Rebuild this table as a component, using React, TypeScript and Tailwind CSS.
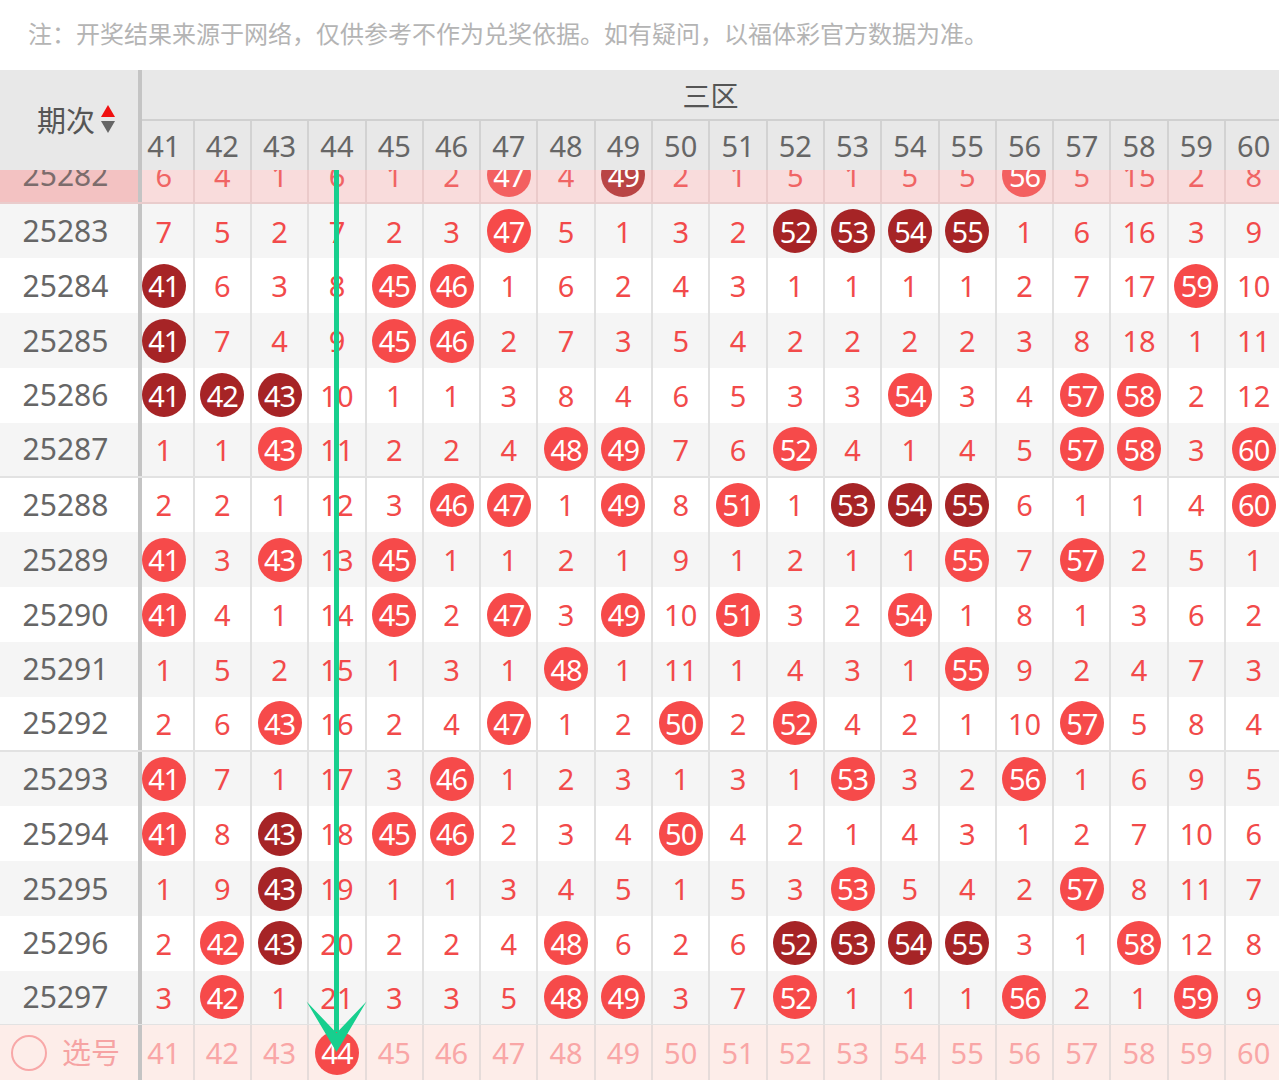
import React from "react";

const FONT = { fontFamily: '"Noto Sans", "Noto Sans CJK SC", sans-serif' };

const COLS = Array.from({ length: 20 }, (_, i) => 41 + i);

const ROWS: [string, string][] = [
  ["25282", "6 4 1 6 1 2 b47 4 d49 2 1 5 1 5 5 b56 5 15 2 8"],
  ["25283", "7 5 2 7 2 3 b47 5 1 3 2 d52 d53 d54 d55 1 6 16 3 9"],
  ["25284", "d41 6 3 8 b45 b46 1 6 2 4 3 1 1 1 1 2 7 17 b59 10"],
  ["25285", "d41 7 4 9 b45 b46 2 7 3 5 4 2 2 2 2 3 8 18 1 11"],
  ["25286", "d41 d42 d43 10 1 1 3 8 4 6 5 3 3 b54 3 4 b57 b58 2 12"],
  ["25287", "1 1 b43 11 2 2 4 b48 b49 7 6 b52 4 1 4 5 b57 b58 3 b60"],
  ["25288", "2 2 1 12 3 b46 b47 1 b49 8 b51 1 d53 d54 d55 6 1 1 4 b60"],
  ["25289", "b41 3 b43 13 b45 1 1 2 1 9 1 2 1 1 b55 7 b57 2 5 1"],
  ["25290", "b41 4 1 14 b45 2 b47 3 b49 10 b51 3 2 b54 1 8 1 3 6 2"],
  ["25291", "1 5 2 15 1 3 1 b48 1 11 1 4 3 1 b55 9 2 4 7 3"],
  ["25292", "2 6 b43 16 2 4 b47 1 2 b50 2 b52 4 2 1 10 b57 5 8 4"],
  ["25293", "b41 7 1 17 3 b46 1 2 3 1 3 1 b53 3 2 b56 1 6 9 5"],
  ["25294", "b41 8 d43 18 b45 b46 2 3 4 b50 4 2 1 4 3 1 2 7 10 6"],
  ["25295", "1 9 d43 19 1 1 3 4 5 1 5 3 b53 5 4 2 b57 8 11 7"],
  ["25296", "2 b42 d43 20 2 2 4 b48 6 2 6 d52 d53 d54 d55 3 1 b58 12 8"],
  ["25297", "3 b42 1 21 3 3 5 b48 b49 3 7 b52 1 1 1 b56 2 1 b59 9"],
];

// first column sits partly under the sticky period column's bar
const colWidth = (i: number) =>
  i === 0 ? "w-[52.7px] pr-[7px]" : "w-[57.3px]";

function Value({ v, hl }: { v: string; hl: boolean }) {
  if (v[0] === "b" || v[0] === "d") {
    const bg =
      v[0] === "b"
        ? hl
          ? "bg-[#f36060]"
          : "bg-[#f64a4a]"
        : hl
        ? "bg-[#b94545]"
        : "bg-[#a62426]";
    return (
      <span
        className={`w-[44px] h-[44px] rounded-full flex items-center justify-center text-white text-[29px] leading-none tracking-[-1px] ${bg}`}
      >
        {v.slice(1)}
      </span>
    );
  }
  return (
    <span
      className={`text-[29px] leading-none ${hl ? "text-[#f06464]" : "text-[#f24a4a]"}`}
    >
      {v}
    </span>
  );
}

function Row({ period, values }: { period: string; values: string }) {
  const hl = period === "25282";
  const gray = Number(period) % 2 === 1;
  const groupEnd = period.endsWith("2") || period.endsWith("7");
  const rowBg = hl ? "bg-[#f9dcdc]" : gray ? "bg-[#f5f5f5]" : "bg-white";
  const sep = groupEnd
    ? hl
      ? "border-b-2 border-[#e9cccc]"
      : "border-b-2 border-[#e2e2e2]"
    : "";
  const cellBorder = hl ? "border-[#ebcaca]" : "border-[#e0e0e0]";
  return (
    <div className={`flex h-[54.8px] ${rowBg} ${sep}`}>
      <div
        className={`shrink-0 w-[142px] border-r-4 border-[#c4c4c4] pr-[7px] flex items-center justify-center text-[30px] leading-none ${
          hl ? "bg-[#f3c2c2] text-[#7c6c6c]" : "text-[#666666]"
        }`}
      >
        {period}
      </div>
      {values.split(" ").map((v, i) => (
        <div
          key={i}
          className={`shrink-0 ${colWidth(i)} border-r-2 ${cellBorder} flex items-center justify-center`}
        >
          <Value v={v} hl={hl} />
        </div>
      ))}
    </div>
  );
}

export default function App() {
  return (
    <div
      className="relative w-[1279px] h-[1080px] overflow-hidden bg-white"
      style={FONT}
    >
      <div className="h-[70px] pl-[28px] pb-[3px] flex items-center text-[24px] text-[#b4b4b4] whitespace-nowrap">
        注：开奖结果来源于网络，仅供参考不作为兑奖依据。如有疑问，以福体彩官方数据为准。
      </div>

      {/* header */}
      <div className="flex h-[100px] bg-[#e8e8e8]">
        <div className="shrink-0 w-[142px] border-r-4 border-[#c4c4c4] flex items-center pl-[37px] gap-[6px]">
          <span className="text-[29px] leading-none text-[#555555]">期次</span>
          <span className="flex flex-col gap-[4px] pb-[2px]">
            <svg width="14" height="12" viewBox="0 0 14 12">
              <path d="M7 0 L14 12 L0 12 Z" fill="#f01010" />
            </svg>
            <svg width="14" height="12" viewBox="0 0 14 12">
              <path d="M0 0 L14 0 L7 12 Z" fill="#666666" />
            </svg>
          </span>
        </div>
        <div className="flex-1 min-w-0 flex flex-col">
          <div className="h-[51px] pt-[2px] border-b-2 border-[#d0d0d0] flex items-center justify-center text-[28px] text-[#555555] leading-none">
            三区
          </div>
          <div className="flex h-[49px]">
            {COLS.map((c, i) => (
              <div
                key={c}
                className={`shrink-0 ${colWidth(i)} border-r-2 border-[#d2d2d2] flex items-center justify-center text-[29px] leading-none text-[#666666]`}
              >
                {c}
              </div>
            ))}
          </div>
        </div>
      </div>

      {/* body, scrolled so the first row sits under the header */}
      <div className="h-[855px] overflow-hidden">
        <div className="-mt-[21.2px]">
          {ROWS.map(([p, v]) => (
            <Row key={p} period={p} values={v} />
          ))}
        </div>
      </div>

      {/* pick row */}
      <div className="flex h-[55px] bg-[#fdede9]">
        <div className="shrink-0 w-[142px] border-r-4 border-[#c4c4c4] flex items-center pl-[11px] gap-[15px]">
          <span className="w-[36px] h-[36px] rounded-full border-2 border-[#f8a8a8]" />
          <span className="text-[29px] leading-none text-[#f6a3a3]">选号</span>
        </div>
        {COLS.map((c, i) => (
          <div
            key={c}
            className={`shrink-0 ${colWidth(i)} border-r-2 border-[#e6dcda] flex items-center justify-center`}
          >
            {c === 44 ? (
              <span className="w-[44px] h-[44px] rounded-full bg-[#f64a4a] flex items-center justify-center text-white text-[29px] leading-none tracking-[-1px]">
                44
              </span>
            ) : (
              <span className="text-[29px] leading-none text-[#f9a6a6]">{c}</span>
            )}
          </div>
        ))}
      </div>

      {/* trend arrow */}
      <svg
        className="absolute inset-0 pointer-events-none"
        width="1279"
        height="1080"
        viewBox="0 0 1279 1080"
      >
        <rect x="334" y="170" width="5" height="862" fill="#17cf8e" />
        <path
          d="M306.5 1001.5 L336.5 1033 L366.5 1001.5 L336.5 1052 Z"
          fill="#17cf8e"
        />
      </svg>
    </div>
  );
}
